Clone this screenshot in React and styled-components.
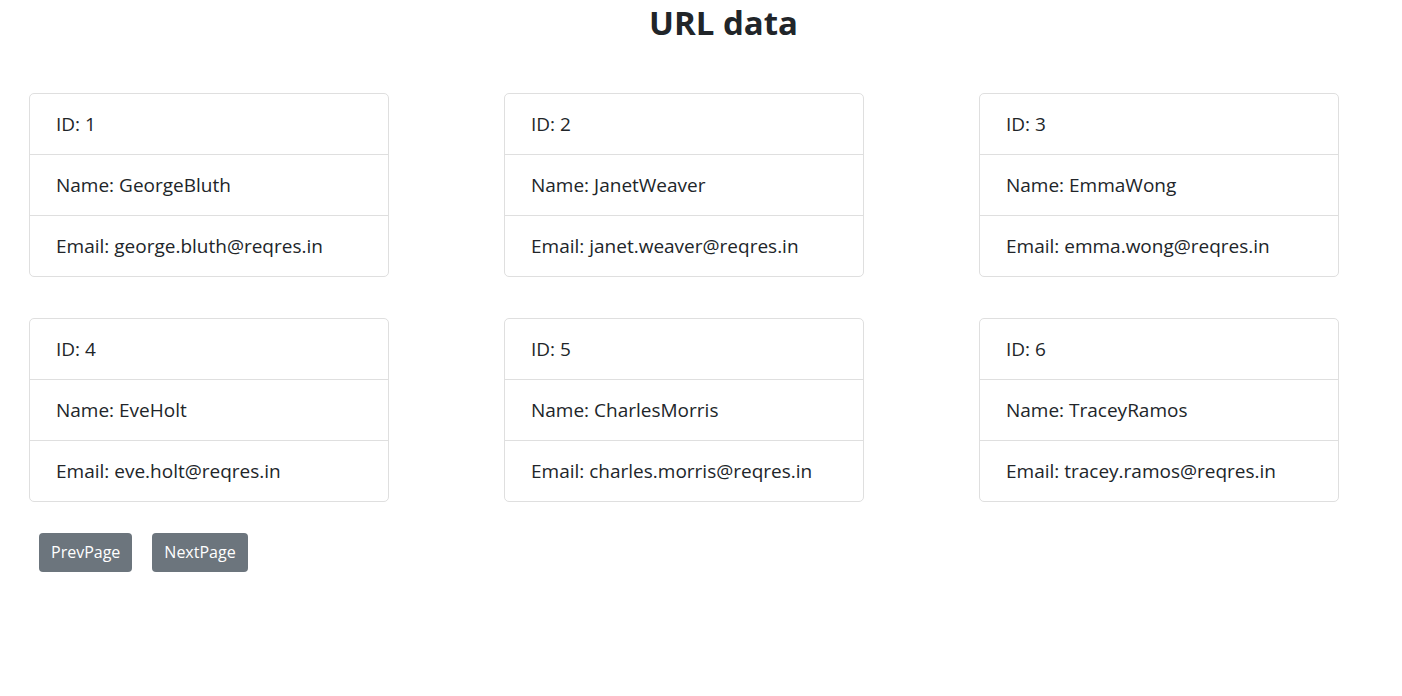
import React, { useState } from 'react';
import styled, { createGlobalStyle } from 'styled-components';

const users = [
  { id: 1, first_name: 'George', last_name: 'Bluth', email: 'george.bluth@reqres.in' },
  { id: 2, first_name: 'Janet', last_name: 'Weaver', email: 'janet.weaver@reqres.in' },
  { id: 3, first_name: 'Emma', last_name: 'Wong', email: 'emma.wong@reqres.in' },
  { id: 4, first_name: 'Eve', last_name: 'Holt', email: 'eve.holt@reqres.in' },
  { id: 5, first_name: 'Charles', last_name: 'Morris', email: 'charles.morris@reqres.in' },
  { id: 6, first_name: 'Tracey', last_name: 'Ramos', email: 'tracey.ramos@reqres.in' },
];

const GlobalStyle = createGlobalStyle`
  html, body {
    margin: 0;
    background: #fff;
    overflow: hidden;
  }
  body {
    font-family: "Open Sans", "Noto Sans", "Liberation Sans", sans-serif;
    color: #212529;
  }
`;

const App = () => {
  const [page, setPage] = useState(1);

  return (
    <>
      <GlobalStyle />
      <Page>
        <Title>URL data</Title>
        <CardGrid>
          {users.map(({ id, first_name, last_name, email }) => (
            <Card key={id}>
              <Item>ID: {id}</Item>
              <Item>Name: {first_name}{last_name}</Item>
              <Item>Email: {email}</Item>
            </Card>
          ))}
        </CardGrid>
        <ButtonGroup>
          <PageButton onClick={() => setPage(Math.max(1, page - 1))}>PrevPage</PageButton>
          <PageButton onClick={() => setPage(page + 1)}>NextPage</PageButton>
        </ButtonGroup>
      </Page>
    </>
  );
};

const Page = styled.div`
  padding: 0 0 0 29px;
`;

const Title = styled.h1`
  margin: 0 0 51px 16px;
  padding-top: 4px;
  text-align: center;
  font-size: 33px;
  font-weight: 700;
  line-height: 38px;
  color: #212529;
`;

const CardGrid = styled.div`
  display: grid;
  grid-template-columns: repeat(3, 475px);
  row-gap: 41px;
`;

const Card = styled.div`
  width: 360px;
  box-sizing: border-box;
  border: 1px solid #dfdfdf;
  border-radius: 5px;
  background: #fff;
`;

const Item = styled.div`
  height: 60px;
  display: flex;
  align-items: center;
  padding: 0 26px;
  font-size: 19px;
  color: #212529;

  & + & {
    border-top: 1px solid #dfdfdf;
  }
`;

const ButtonGroup = styled.div`
  display: flex;
  gap: 20px;
  margin: 31px 0 0 10px;
`;

const PageButton = styled.button`
  font-family: inherit;
  font-size: 16px;
  line-height: 25px;
  padding: 7px 12px;
  color: #fff;
  background-color: #6c757d;
  border: none;
  border-radius: 4px;
  cursor: pointer;
`;

export default App;
